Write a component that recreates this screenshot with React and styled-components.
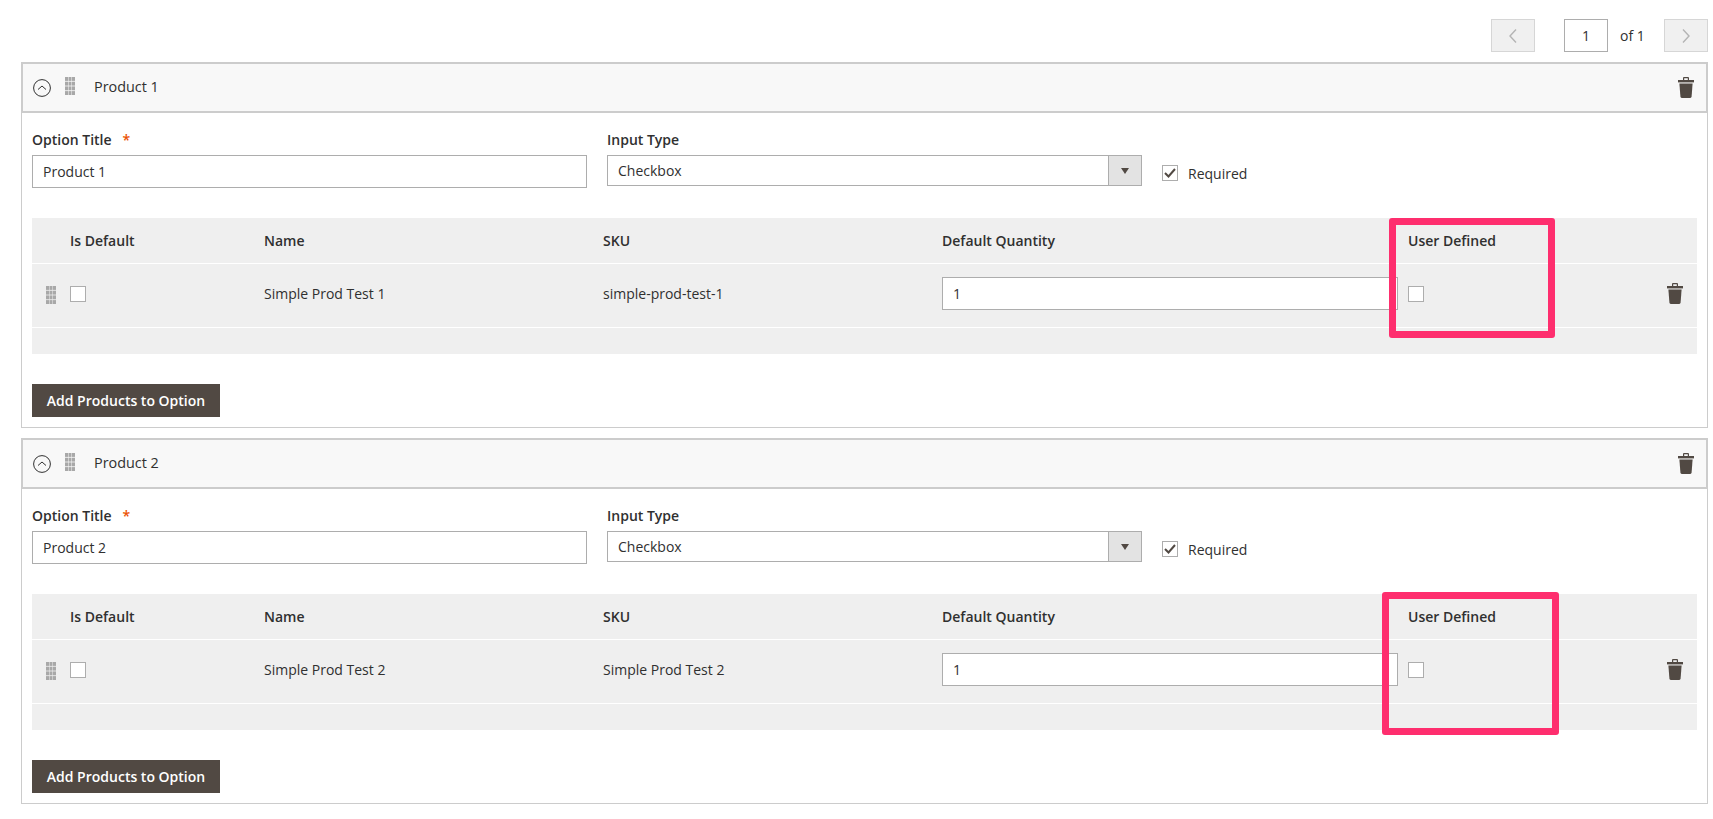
import styled, { createGlobalStyle } from 'styled-components'

const GlobalStyle = createGlobalStyle`
    html, body {
        margin: 0;
        background: #fff;
        font-family: "Open Sans", "Liberation Sans", sans-serif;
        font-size: 14px;
        color: #303030;
    }
    * {
        box-sizing: border-box;
    }
`

const Page = styled.div`
    width: 1713px;
    height: 819px;
    padding: 19px 5px 0 21px;
    overflow: hidden;
`

const Pagination = styled.div`
    display: flex;
    align-items: center;
    justify-content: flex-end;
    height: 33px;
    margin-bottom: 10px;
`

const PageButton = styled.button`
    width: 44px;
    height: 33px;
    padding: 0;
    display: flex;
    align-items: center;
    justify-content: center;
    background: #f0f0f0;
    border: 1px solid #d6d6d6;
    margin-right: ${p => p.$prev ? '29px' : '0'};
`

const PageInput = styled.input`
    width: 44px;
    height: 33px;
    border: 1px solid #adadad;
    background: #fff;
    text-align: center;
    font: inherit;
    color: #303030;
    padding: 0;
`

const PageOf = styled.span`
    width: 56px;
    padding-left: 12px;
    line-height: 33px;
`

const Card = styled.section`
    height: 366px;
    border: 1px solid #ccc;
    margin-bottom: 10px;
`

const CardHeader = styled.header`
    height: 50px;
    display: flex;
    align-items: center;
    padding: 0 12px 0 10px;
    background: #f8f8f8;
    border: 1px solid #ccc;
    border-width: 1px 1px 2px;
`

const Toggle = styled.svg`
    width: 18px;
    height: 18px;
    margin-right: 14px;
`

const HeaderHandle = styled.div`
    margin-top: -3px;
`

const Handle = styled.svg`
    width: 10px;
    height: 18px;
    display: block;
`

const HeaderTitle = styled.h3`
    flex: 1;
    margin: 0 0 3px 19px;
    font-size: 14.400px;
    font-weight: 400;
`

const Trash = styled.svg`
    width: 16px;
    height: 21px;
    display: block;
`

const CardBody = styled.div`
    padding: 17px 10px 0;
`

const FieldRow = styled.div`
    display: flex;
    align-items: flex-start;
`

const Field = styled.div`
    width: ${p => p.$width}px;
    margin-right: ${p => p.$gap}px;
`

const FieldLabel = styled.label`
    display: block;
    height: 20px;
    margin-bottom: 5px;
    line-height: 20px;
    font-weight: 600;
`

const Asterisk = styled.span`
    margin-left: 11px;
    color: #eb5202;
`

const TextInput = styled.input`
    display: block;
    width: 100%;
    height: 33px;
    padding: 0 10px;
    border: 1px solid #adadad;
    background: #fff;
    font: inherit;
    color: #303030;
`

const Select = styled.div`
    display: flex;
    height: 31px;
    border: 1px solid #adadad;
    background: #fff;
`

const SelectValue = styled.span`
    flex: 1;
    padding-left: 10px;
    line-height: 30px;
`

const SelectArrow = styled.span`
    width: 33px;
    display: flex;
    align-items: center;
    justify-content: center;
    background: #e3e3e3;
    border-left: 1px solid #adadad;

    &::after {
        content: '';
        border-style: solid;
        border-width: 6px 4px 0;
        border-color: #514943 transparent transparent;
    }
`

const CheckRow = styled.label`
    display: flex;
    align-items: center;
    gap: 10px;
    margin-top: 32px;
`

const CheckText = styled.span`
    margin-top: 2px;
`

const CheckBox = styled.span`
    display: flex;
    align-items: center;
    justify-content: center;
    width: 16px;
    height: 16px;
    flex: none;
    background: #fff;
    border: 1px solid #adadad;
`

const Table = styled.div`
    position: relative;
    margin-top: 30px;
    height: 136px;
    background: #efefef;
`

const Row = styled.div`
    display: grid;
    grid-template-columns: 38px 194px 339px 339px 466px 1fr 30px;
    align-items: center;
    height: ${p => p.$height}px;
    padding-bottom: ${p => p.$head ? 0 : 4}px;
    font-weight: ${p => p.$head ? 600 : 400};
    border-bottom: 1px solid #fff;
`

const RowFoot = styled.div`
    height: 26px;
`

const GripCell = styled.div`
    padding-left: 14px;
    margin-top: 2px;
`

const QtyInput = styled(TextInput)`
    width: 456px;
`

const Highlight = styled.div`
    position: absolute;
    left: ${p => p.$left}px;
    top: ${p => p.$top}px;
    width: ${p => p.$width}px;
    height: ${p => p.$height}px;
    border: 7px solid #fe2e6e;
    border-radius: 3px;
`

const AddButton = styled.button`
    display: block;
    width: 188px;
    height: 33px;
    margin-top: 30px;
    padding: 0;
    border: 0;
    background: #514943;
    color: #fff;
    font: inherit;
    font-weight: 600;
`

const Chevron = ({ dir }) => (
	<svg width='12' height='16' viewBox='0 0 12 16' fill='none'>
		<path
			d={dir === 'left' ? 'M9 1.5 3 8l6 6.5' : 'M3 1.5 9 8l-6 6.5'}
			stroke='#b4b4b4'
			strokeWidth='1.4'
		/>
	</svg>
)

const GripIcon = () => (
	<Handle viewBox='0 0 10 18' fill='#a8a8a8'>
		{[0, 4.7, 9.4, 14.1].map(y =>
			[0, 3.5, 7].map(x => (
				<rect key={`${x}-${y}`} x={x} y={y} width='3' height='3.9' />
			))
		)}
	</Handle>
)

const TrashIcon = () => (
	<Trash viewBox='0 0 16 21' fill='#514943'>
		<path d='M5 3V1.2C5 .6 5.5 0 6.2 0h3.6c.7 0 1.2.6 1.2 1.2V3H9.800V1.300H6.200V3z' />
		<path d='M0 3h16v2.400H0z' />
		<path d='M1.400 6.400h13.200l-1 13.200c-.1.8-.6 1.400-1.400 1.400H3.800c-.8 0-1.300-.6-1.400-1.400z' />
	</Trash>
)

const options = [
	{
		title: 'Product 1',
		name: 'Simple Prod Test 1',
		sku: 'simple-prod-test-1',
		box: { left: 1357, top: 0, width: 166, height: 120 },
	},
	{
		title: 'Product 2',
		name: 'Simple Prod Test 2',
		sku: 'Simple Prod Test 2',
		box: { left: 1350, top: -2, width: 177, height: 143 },
	},
]

const OptionCard = ({ option }) => (
	<Card>
		<CardHeader>
			<Toggle viewBox='0 0 18 18' fill='none' stroke='#303030'>
				<circle cx='9' cy='9' r='8.400' strokeWidth='1' />
				<path d='M5 10.500 9 7l4 3.500' strokeWidth='1' />
			</Toggle>
			<HeaderHandle>
				<GripIcon />
			</HeaderHandle>
			<HeaderTitle>{option.title}</HeaderTitle>
			<TrashIcon />
		</CardHeader>
		<CardBody>
			<FieldRow>
				<Field $width={555} $gap={20}>
					<FieldLabel>
						Option Title<Asterisk>*</Asterisk>
					</FieldLabel>
					<TextInput defaultValue={option.title} />
				</Field>
				<Field $width={535} $gap={20}>
					<FieldLabel>Input Type</FieldLabel>
					<Select>
						<SelectValue>Checkbox</SelectValue>
						<SelectArrow />
					</Select>
				</Field>
				<CheckRow>
					<CheckBox>
						<svg width='12' height='10' viewBox='0 0 12 10' fill='none'>
							<path d='M1 5l3.500 3.500L11 1' stroke='#514943' strokeWidth='2' />
						</svg>
					</CheckBox>
					<CheckText>Required</CheckText>
				</CheckRow>
			</FieldRow>
			<Table>
				<Row $head $height={46}>
					<span />
					<span>Is Default</span>
					<span>Name</span>
					<span>SKU</span>
					<span>Default Quantity</span>
					<span>User Defined</span>
					<span />
				</Row>
				<Row $height={64}>
					<GripCell>
						<GripIcon />
					</GripCell>
					<CheckBox />
					<span>{option.name}</span>
					<span>{option.sku}</span>
					<QtyInput defaultValue='1' />
					<CheckBox />
					<TrashIcon />
				</Row>
				<RowFoot />
				<Highlight
					$left={option.box.left}
					$top={option.box.top}
					$width={option.box.width}
					$height={option.box.height}
				/>
			</Table>
			<AddButton>Add Products to Option</AddButton>
		</CardBody>
	</Card>
)

export default function App() {
	return (
		<>
			<GlobalStyle />
			<Page>
				<Pagination>
					<PageButton $prev>
						<Chevron dir='left' />
					</PageButton>
					<PageInput defaultValue='1' />
					<PageOf>of 1</PageOf>
					<PageButton>
						<Chevron dir='right' />
					</PageButton>
				</Pagination>
				{options.map(option => (
					<OptionCard key={option.title} option={option} />
				))}
			</Page>
		</>
	)
}
